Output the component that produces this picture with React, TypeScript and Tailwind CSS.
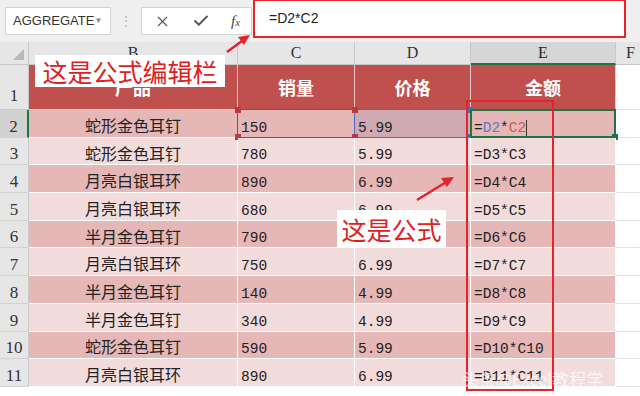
import { X, Check } from 'lucide-react';

const rows = [
  { n: 2, name: '蛇形金色耳钉', qty: '150', price: '5.99' },
  { n: 3, name: '蛇形金色耳钉', qty: '780', price: '5.99' },
  { n: 4, name: '月亮白银耳环', qty: '890', price: '6.99' },
  { n: 5, name: '月亮白银耳环', qty: '680', price: '6.99' },
  { n: 6, name: '半月金色耳钉', qty: '790', price: '6.99' },
  { n: 7, name: '月亮白银耳环', qty: '750', price: '6.99' },
  { n: 8, name: '半月金色耳钉', qty: '140', price: '4.99' },
  { n: 9, name: '半月金色耳钉', qty: '340', price: '4.99' },
  { n: 10, name: '蛇形金色耳钉', qty: '590', price: '5.99' },
  { n: 11, name: '月亮白银耳环', qty: '890', price: '6.99' },
];

const cjk = "font-['Noto_Sans_CJK_SC',sans-serif]";
const mono = "font-['Liberation_Mono',monospace]";
const serif = "font-['Liberation_Serif',serif]";

const Dot = ({ className }: { className: string }) => (
  <span className={`absolute w-[6px] h-[6px] ${className}`} />
);

const App = () => {
  return (
    <div className="relative w-[640px] h-[396px] overflow-hidden bg-white font-['Liberation_Sans',sans-serif]">
      {/* formula bar */}
      <div className="flex items-start h-[42px] bg-[#efefef] pl-[5px]">
        <div className="mt-[7px] w-[106px] h-[28px] bg-white border border-[#d4d4d4] flex items-center justify-between pl-[7px] pr-[9px] text-[13px] text-[#333]">
          <span>AGGREGATE</span>
          <span className="text-[8px] text-[#888]">▼</span>
        </div>
        <div className="w-[30px] h-[42px] flex items-center justify-center text-[#bdbdbd] text-[14px]">⋮</div>
        <div className="mt-[7px] w-[111px] h-[28px] bg-white border border-[#d4d4d4] flex items-center pl-[12px] gap-[21px] text-[#555]">
          <X size={17} strokeWidth={1.6} />
          <Check size={18} strokeWidth={2.4} />
          <span className={`${serif} italic text-[15px] text-[#444]`}>
            f<span className="text-[11px]">x</span>
          </span>
        </div>
        <div className="ml-[1px] -mt-[1px] w-[373px] h-[39px] bg-white border-[2.5px] border-[#e3242b] flex items-center pl-[14px] text-[14px] text-[#222]">
          =D2*C2
        </div>
      </div>

      {/* sheet */}
      <div className="grid grid-cols-[29px_209px_117px_116px_145px_1fr]">
        {/* column headers */}
        <div className="relative h-[23px] bg-[#e6e6e6] border-r border-b border-[#c8c8c8]">
          <svg className="absolute right-[4px] bottom-[4px]" width="11" height="11">
            <polygon points="11,0 11,11 0,11" fill="#b8b8b8" />
          </svg>
        </div>
        {['B', 'C', 'D'].map((c) => (
          <div key={c} className={`h-[23px] bg-[#e6e6e6] border-r border-b border-[#c8c8c8] flex items-center justify-center text-[16px] text-[#333] ${serif}`}>
            {c}
          </div>
        ))}
        <div className={`h-[23px] bg-[#d6d6d6] border-r border-[#c8c8c8] border-b-2 border-b-[#217346] flex items-center justify-center text-[16px] text-[#222] ${serif}`}>
          E
        </div>
        <div className={`h-[23px] bg-[#e6e6e6] border-b border-[#c8c8c8] flex items-center pl-[10px] text-[16px] text-[#333] ${serif}`}>
          F
        </div>

        {/* row 1 */}
        <div className={`h-[45px] bg-[#e6e6e6] border-r border-b border-[#c8c8c8] flex items-end justify-center pb-[1px] text-[17px] text-[#333] ${serif}`}>
          1
        </div>
        {['产品', '销量', '价格', '金额'].map((h) => (
          <div key={h} className={`h-[45px] bg-[#c0504d] border-r border-b border-[#e9c7c6] flex items-center justify-center text-[18px] font-bold text-white ${cjk}`}>
            {h}
          </div>
        ))}
        <div className="h-[45px] bg-white border-b border-[#e2e2e2]" />

        {/* data rows */}
        {rows.map((r) => {
          const even = r.n % 2 === 0;
          const bg = even ? 'bg-[#e5b8b7]' : 'bg-[#f2dcdb]';
          const active = r.n === 2;
          return [
            <div
              key={`n${r.n}`}
              className={`h-[27.7px] ${active ? 'bg-[#d2d2d2] border-r-2 border-r-[#217346]' : 'bg-[#e6e6e6] border-r border-[#c8c8c8]'} border-b border-b-[#d2d2d2] flex items-end justify-center text-[17px] leading-[21px] text-[#333] ${serif}`}
            >
              {r.n}
            </div>,
            <div key={`b${r.n}`} className={`h-[27.7px] ${bg} border-r border-b border-white flex items-center justify-center pt-[3px] text-[16px] text-[#222] ${cjk}`}>
              {r.name}
            </div>,
            <div key={`c${r.n}`} className={`relative h-[27.7px] ${bg} border-r border-b border-white flex items-end pl-[3px] pb-[1px] text-[14.5px] leading-[16px] text-[#222] ${mono}`}>
              {r.qty}
              {active && (
                <>
                  <span className="absolute -left-[1px] -top-[1px] -right-[1px] -bottom-[1px] border-[1.5px] border-[#b93a43]" />
                  <Dot className="-left-[3px] -top-[3px] bg-[#b93a43]" />
                  <Dot className="-left-[3px] -bottom-[3px] bg-[#b93a43]" />
                </>
              )}
            </div>,
            <div key={`d${r.n}`} className={`relative h-[27.7px] ${active ? 'bg-[#cfaab3]' : bg} border-r border-b border-white flex items-end pl-[3px] pb-[1px] text-[14.5px] leading-[16px] text-[#222] ${mono}`}>
              {r.price}
              {active && (
                <>
                  <span className="absolute -left-[1px] -top-[1px] -right-[1px] -bottom-[1px] border-[1.5px] border-[#4a6cc4]" />
                  <Dot className="-left-[3px] -top-[3px] bg-[#b93a43]" />
                  <Dot className="-left-[3px] -bottom-[3px] bg-[#b93a43]" />
                  <Dot className="-right-[3px] -top-[3px] bg-[#4a6cc4]" />
                  <Dot className="-right-[3px] -bottom-[3px] bg-[#4a6cc4]" />
                </>
              )}
            </div>,
            <div key={`e${r.n}`} className={`relative h-[27.7px] ${bg} border-r border-b border-white flex items-end pl-[3px] pb-[1px] text-[14.5px] leading-[16px] text-[#222] ${mono}`}>
              {active ? (
                <span>
                  =<span className="text-[#6574c4]">D2</span>*<span className="text-[#d0575c]">C2</span>
                  <span className="inline-block w-[1px] h-[16px] bg-[#333] align-bottom" />
                </span>
              ) : (
                `=D${r.n}*C${r.n}`
              )}
              {active && (
                <>
                  <span className="absolute -left-[1px] -top-[1px] -right-[1px] -bottom-[1px] border-2 border-[#217346]" />
                  <Dot className="-right-[3px] -bottom-[3px] bg-[#217346]" />
                </>
              )}
            </div>,
            <div key={`f${r.n}`} className="h-[27.7px] bg-white border-b border-[#e2e2e2]" />,
          ];
        })}
      </div>

      {/* annotations */}
      <div className={`absolute left-[35px] top-[55px] w-[190px] h-[32px] bg-white flex items-center justify-center text-[25px] leading-none text-[#e0201f] ${cjk}`}>
        这是公式编辑栏
      </div>
      <div className={`absolute left-[337px] top-[210px] w-[109px] h-[38px] bg-white flex items-center justify-center text-[25px] leading-none text-[#e0201f] ${cjk}`}>
        这是公式
      </div>
      <div className="absolute left-[466px] top-[100px] w-[88px] h-[291px] border-[2.5px] border-[#e3242b]" />
      <svg className="absolute inset-0 pointer-events-none" width="640" height="396">
        <line x1="227" y1="52" x2="244" y2="39.5" stroke="#e3242b" strokeWidth="2.5" />
        <polygon points="250,35 238,37 244,45" fill="#e3242b" />
        <line x1="417" y1="200" x2="447" y2="181.5" stroke="#e3242b" strokeWidth="2.5" />
        <polygon points="454,177 441,178 447,187" fill="#e3242b" />
      </svg>
      <div className={`absolute left-[462px] top-[366px] text-[17px] text-white/70 ${cjk}`}>
        头条@Excel教程学
      </div>
    </div>
  );
};

export default App;
